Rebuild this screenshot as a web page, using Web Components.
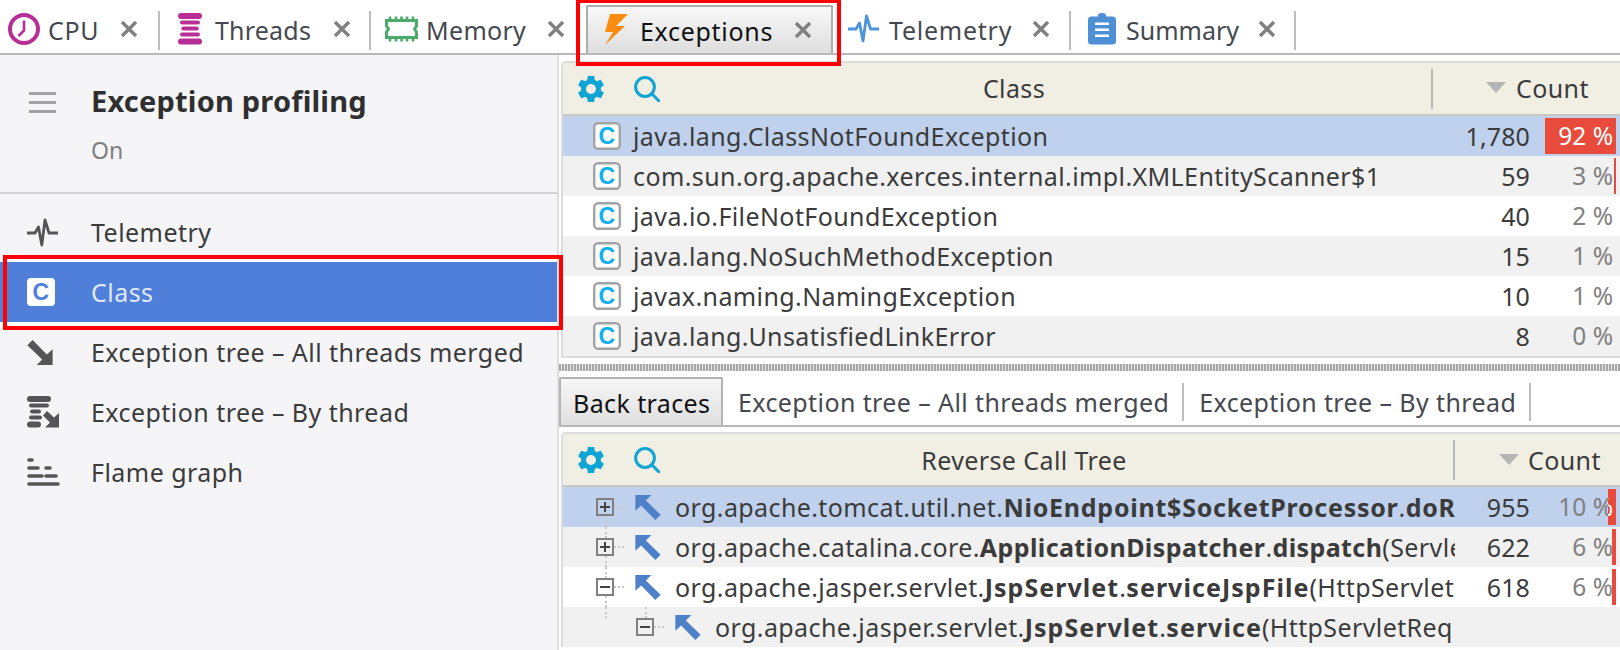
<!DOCTYPE html>
<html><head><meta charset="utf-8">
<style>
html,body{margin:0;padding:0;width:1620px;height:650px;overflow:hidden;background:#fff;font-family:"Noto Sans","Liberation Sans",sans-serif;color:#3b3b3b}
</style></head><body>
<app-root></app-root>
<script>
const GEAR='<svg class="g" width="26" height="26" viewBox="2.5 2.5 19 19" fill="#0ea5d4"><path d="M19.14 12.94c.04-.3.06-.61.06-.94 0-.32-.02-.64-.07-.94l2.03-1.58c.18-.14.23-.41.12-.61l-1.92-3.32c-.12-.22-.37-.29-.59-.22l-2.39.96c-.5-.38-1.03-.7-1.62-.94l-.36-2.54c-.04-.24-.24-.41-.48-.41h-3.84c-.24 0-.43.17-.47.41l-.36 2.54c-.59.24-1.13.57-1.62.94l-2.39-.96c-.22-.08-.47 0-.59.22L2.74 8.87c-.12.21-.08.47.12.61l2.03 1.58c-.05.3-.09.63-.09.94s.02.64.07.94l-2.03 1.58c-.18.14-.23.41-.12.61l1.92 3.32c.12.22.37.29.59.22l2.39-.96c.5.38 1.03.7 1.62.94l.36 2.54c.05.24.24.41.48.41h3.84c.24 0 .44-.17.47-.41l.36-2.54c.59-.24 1.13-.56 1.62-.94l2.39.96c.22.08.47 0 .59-.22l1.92-3.32c.12-.22.07-.47-.12-.61l-2.01-1.58zM12 15.6c-1.98 0-3.6-1.62-3.6-3.6s1.62-3.6 3.6-3.6 3.6 1.62 3.6 3.6-1.62 3.6-3.6 3.6z"/></svg>';
const SEARCH='<svg class="s" width="26" height="26" viewBox="0 0 26 26" fill="none" stroke="#0ea5d4" stroke-width="3"><circle cx="11" cy="11" r="9.4"/><path d="M17.8 17.8L25 25" stroke-linecap="round"/></svg>';
const ARROW_DR='M0 5.3L5.3 0L19.5 14.5L25.3 9.3V25H9.3L14.8 19.5Z';
const ICONS={
cpu:'<svg width="32" height="32" viewBox="0 0 32 32" fill="none" stroke="#b82e96"><circle cx="16" cy="16" r="14" stroke-width="4"/><path d="M16 7.5V17.5L10.5 23" stroke-width="2.6"/></svg>',
threads:'<svg width="24" height="32" viewBox="0 0 24 32" fill="#b82e96"><rect x="0" y="0" width="24" height="6" rx="3"/><rect x="2" y="7.5" width="20" height="4" rx="2"/><rect x="3.3" y="13.4" width="17.4" height="4" rx="2"/><rect x="2" y="19.4" width="20" height="4" rx="2"/><rect x="0" y="25.6" width="24" height="6" rx="3"/></svg>',
memory:'<svg width="33" height="26" viewBox="0 0 33 26" fill="none" stroke="#4caa6a"><path d="M1.5 4.5H31.5V10L29.5 13L31.5 16V21.5H1.5V16L3.500 13L1.5 10Z" stroke-width="3"/><path d="M5 0.500V4M11 0.500V4M16.500 0.500V4M22 0.500V4M28 0.500V4M5 22V25.500M11 22V25.500M16.500 22V25.500M22 22V25.500M28 22V25.500" stroke-width="2.600"/></svg>',
exc:'<svg width="26" height="32" viewBox="0 0 26 32" fill="#fb8c12"><path d="M23 0H5L0 18H8L0 31L20 12H11Z"/></svg>',
tele:'<svg width="31" height="30" viewBox="0 0 31 30" fill="none" stroke="#4d93d9" stroke-width="2.8" stroke-linejoin="round"><path d="M0 15H8L11.500 9L15 27L18.500 2L22.500 15H31"/></svg>',
summary:'<svg width="28" height="32" viewBox="0 0 28 32" fill="#4d90d6"><rect x="0" y="3.500" width="28" height="28" rx="3.500"/><rect x="10" y="0" width="8" height="8" rx="3"/><path d="M7 9.500H21V12H7ZM7 15.500H21V18H7ZM7 21.500H21V24H7Z" fill="#fff"/></svg>',
s_tele:'<svg width="31" height="29" viewBox="0 0 31 29" fill="none" stroke="#555" stroke-width="2.800" stroke-linejoin="round"><path d="M0 15H8L11.500 9L14.800 27L18 2L22 15H31"/></svg>',
s_class:'<svg width="28" height="28" viewBox="0 0 28 28"><rect width="28" height="28" rx="4" fill="#fff"/><text x="14" y="22.300" text-anchor="middle" font-family="Liberation Sans" font-weight="700" font-size="23" fill="#4f7fd9">C</text></svg>',
s_arrow:`<svg width="26" height="25" viewBox="0 0 25.300 25" fill="#555"><path d="${ARROW_DR}"/></svg>`,
s_thread:'<svg width="33" height="32" viewBox="0 0 33 32" fill="#555"><rect x="0" y="0" width="24" height="6" rx="3"/><rect x="2" y="7.500" width="20" height="4" rx="2"/><rect x="3" y="13.500" width="11" height="4" rx="2"/><rect x="2" y="19.500" width="13" height="4" rx="2"/><rect x="0" y="25.500" width="14" height="6" rx="3"/><path d="M16 19.500L20 15L27 21.500L32 17V31.500H18L23 26.500Z"/></svg>',
s_flame:'<svg width="33" height="28" viewBox="0 0 33 28"><g stroke="#555" stroke-width="3.600" stroke-linecap="round"><path d="M2 2H5M2 10H11M19 10H23M2 18H15M19 18H29M2 26H31"/></g></svg>'
};
function def(name,cls){customElements.define(name,cls)}
class Base extends HTMLElement{
  constructor(){super();this.attachShadow({mode:'open'})}
  connectedCallback(){this.shadowRoot.innerHTML=this.render()}
}
def('tab-item',class extends Base{render(){
  const a=this.hasAttribute('active');
  return `<style>
  :host{display:flex;align-items:center;box-sizing:border-box;height:48px;width:var(--w);padding-left:var(--pl);flex:none;font-size:25px;letter-spacing:var(--ls,.3px);color:${a?'#111':'#45494f'}}
  :host([active]){background:linear-gradient(#f8f8f8,#dedede);border:2px solid #adadad;border-bottom:0;border-radius:2px 2px 0 0;height:48px;padding-left:14px}
  :host([sep]){position:relative}
  :host([sep])::after{content:"";position:absolute;right:0;top:6px;width:2px;height:39px;background:#bdbdbd}
  .i{display:flex;align-items:center;width:var(--tx);flex:none;height:100%}
  .l{width:var(--lw);flex:none;white-space:nowrap;padding-top:2px}
  svg.x{flex:none}
  </style><span class="i">${ICONS[this.getAttribute('icon')]}</span><span class="l"><slot></slot></span>
  <svg class="x" width="18" height="18" viewBox="0 0 18 18" stroke="#808080" stroke-width="3.400"><path d="M2 2L16 16M16 2L2 16"/></svg>`;
}});
def('tab-bar',class extends Base{render(){return `<style>:host{display:flex;align-items:flex-end;height:53px;box-sizing:content-box;padding-left:0;border-bottom:2px solid #b8b8b8;overflow:visible}
 div{display:flex;align-items:flex-end;height:48px}</style><div><slot></slot></div>`}});
def('side-item',class extends Base{render(){return `<style>:host{display:flex;align-items:center;height:60px;padding-left:27px;font-size:25px;color:#3b3b3b;letter-spacing:.45px}
 :host([selected]){background:#4f7fd9;color:#dfe9fb;box-shadow:0 -3px 0 #fff,0 4px 0 #fff}
 .i{width:64px;flex:none;display:flex;align-items:center}</style><span class="i">${ICONS[this.getAttribute('icon')]}</span><slot></slot>`}});
def('side-panel',class extends Base{render(){return `<style>:host{display:block;width:557px;flex:none;background:#f5f5f8;border-right:2px solid #dedede;box-sizing:content-box;height:595px}
 header{display:flex;height:139px;box-sizing:border-box;border-bottom:2px solid #d3d3d3;padding:28px 0 0 29px}
 .m{width:27px;height:21px;margin:9px 35px 0 0;display:flex;flex-direction:column;justify-content:space-between}
 .m i{display:block;height:3px;background:#a3a3a3}
 h1{margin:0;font-size:29px;line-height:36px;font-weight:700;letter-spacing:.2px;color:#2f2f2f}
 p{margin:16px 0 0;font-size:23px;line-height:30px;color:#808080}
 nav{padding-top:8px;display:block}
 </style><header><div class="m"><i></i><i></i><i></i></div><div><h1>Exception profiling</h1><p>On</p></div></header><nav><slot></slot></nav>`}});
def('data-table',class extends Base{render(){return `<style>:host{display:block;border:2px solid #dcdcdc;border-right:0;border-radius:5px 0 0 0;margin-left:2px;overflow:hidden;background:#fff}
 :host([lower]){border-bottom:0}</style><slot></slot>`}});
def('table-head',class extends Base{render(){
  return `<style>:host{display:flex;align-items:center;height:51px;background:#f1eee3;border-bottom:2px solid #c9c8c0;font-size:25px;letter-spacing:.4px;color:#3b3b3b}
  .tool{display:flex;align-items:center;width:0;flex:none;overflow:visible}
  .g{display:block;margin-left:15px;flex:none} .s{display:block;flex:none;margin-left:30px}
  .t{flex:none;box-sizing:border-box;width:var(--cw);padding-left:var(--cp);text-align:center;height:40px;line-height:var(--lh,40px);border-right:2px solid #b9b9b9}
  .c{flex:1;display:flex;align-items:center;padding-left:var(--sp);margin-top:var(--my,0)}
  .c i{width:0;height:0;border:10px solid transparent;border-top:11px solid #b5b5b5;border-bottom:0;margin-right:var(--tg)}
  </style><div class="tool">${GEAR}${SEARCH}</div>
  <div class="t"><slot></slot></div><div class="c"><i></i>Count</div>`;
}});
const CI='<svg class="ci" width="28" height="28" viewBox="0 0 28 28"><rect x="1.200" y="1.200" width="25.600" height="25.600" rx="4" fill="#fff" stroke="#a3a3a3" stroke-width="2.400"/><text x="14" y="22" text-anchor="middle" font-family="Liberation Sans" font-weight="700" font-size="23" fill="#0cb0f0">C</text></svg>';
const ARR=`<svg width="26" height="25" viewBox="0 0 25.300 25" fill="#4f81c8"><path transform="rotate(180 12.650 12.500)" d="${ARROW_DR}"/></svg>`;
def('data-row',class extends Base{render(){
  const g=n=>this.getAttribute(n);
  const sel=this.hasAttribute('selected'), alt=this.hasAttribute('alt');
  const bar=g('bar');
  const exp=g('exp');
  const lvl=+(g('lvl')||0);
  const lead=exp!==null
   ? `<span class="ex" style="margin-left:${33+lvl*40}px"><svg width="18" height="18" viewBox="0 0 18 18" fill="none"><rect x="1" y="1" width="16" height="16" stroke="#808080" stroke-width="2"/><path d="${exp==='+'?'M4 9H14M9 4V14':'M4 9H14'}" stroke="#444" stroke-width="2"/></svg></span><span class="guide h" style="left:${51+lvl*40}px"></span>${lvl?`<span class="guide v" style="left:82px;top:0;height:11px"></span>`:''}${g('vt')!==null?'<span class="guide v" style="left:42px;top:29px;height:11px"></span>':''}${g('vb')!==null?'<span class="guide v" style="left:42px;top:0;height:11px"></span>':''}<span class="ar" style="margin-left:21px">${ARR}</span>`
   : `<span class="ci-w">${CI}</span>`;
  return `<style>:host{display:flex;align-items:center;position:relative;height:40px;font-size:25px;letter-spacing:.4px;color:#3b3b3b;background:${sel?'#bfd1ec':alt?'#f1f1f1':'#fff'}}
  .n{width:var(--nw);flex:none;display:flex;align-items:center;overflow:hidden;white-space:nowrap;height:100%}
  .ci-w{margin-left:30px;margin-right:12px;display:flex;flex:none}
  .ex,.ar{display:flex;flex:none}.ar{margin-right:14px}
  .guide{position:absolute;border:0 dotted #c8c8c8}
  .guide.h{width:10px;top:19px;border-top-width:2px}
  .guide.v{border-left-width:2px}
  .cnt{width:var(--cw2);flex:none;text-align:right;letter-spacing:.1px}
  .pct{position:absolute;right:7px;top:0;line-height:40px;color:#808080;letter-spacing:0;font-size:24.500px}
  .bar{position:absolute;right:4px;top:2px;bottom:2px;background:#e84b3c;overflow:hidden}
  .bar::after{content:attr(data-t);position:absolute;right:3px;top:-2px;line-height:40px;color:#fff;white-space:nowrap;letter-spacing:0;font-size:24.500px}
  </style><div class="n">${lead}<span><slot></slot></span></div><div class="cnt">${g('count')||''}</div>
  ${g('pct')?`<span class="pct">${g('pct')}</span>`:''}${bar?`<span class="bar" style="width:${bar}px" data-t="${g('pct')}"></span>`:''}`;
}});
def('sub-tab',class extends Base{render(){return `<style>:host{display:flex;align-items:center;box-sizing:border-box;height:48px;flex:none;font-size:25px;letter-spacing:.4px;padding:2px 15px 0 15px;color:#45494f;position:relative;white-space:nowrap}
 :host([active]){background:linear-gradient(#f6f6f6,#dfdfdf);border:2px solid #b3b3b3;border-bottom:0;color:#111;padding:2px 0 0 12px;width:164px;border-radius:2px 2px 0 0}
 :host([sep])::after{content:"";position:absolute;right:0;top:6px;height:38px;width:2px;background:#bdbdbd}</style><slot></slot>`}});
def('sub-tabs',class extends Base{render(){return `<style>:host{display:flex;height:48px;margin:6px 0 0 0;border-bottom:2px solid #b8b8b8}</style><slot></slot>`}});
def('h-split',class extends Base{render(){return `<style>:host{display:block;height:7px;margin-top:6px;background:repeating-linear-gradient(90deg,#a8a8a8 0 2px,#e6e6e6 2px 3px)}</style>`}});
def('red-box',class extends Base{render(){return `<style>:host{position:absolute;box-sizing:border-box;border:4px solid #f00;pointer-events:none;z-index:5}</style>`}});
def('app-root',class extends Base{render(){return `<style>
 :host{display:block;position:relative;width:1620px;height:650px;overflow:hidden}
 .main{display:flex;height:595px}
 .content{flex:1;min-width:0;padding-top:6px;overflow:hidden;background:#fff}
 .up{--nw:840px;--cw2:127px}
 .lo{--nw:892px;--cw2:75px;margin-top:5px}
 b{font-weight:700}
 b.w{letter-spacing:1.050px}
 b.m{letter-spacing:.75px}
 </style>
 <tab-bar>
 <tab-item icon="cpu" sep style="--w:160px;--pl:8px;--tx:40px;--lw:72px;--ls:.7px">CPU</tab-item>
 <tab-item icon="threads" sep style="--w:211px;--pl:18px;--tx:37px;--lw:118px;--ls:.2px">Threads</tab-item>
 <tab-item icon="memory" style="--w:215px;--pl:14px;--tx:41px;--lw:121px">Memory</tab-item>
 <tab-item icon="exc" active style="--w:247px;--tx:35px;--lw:154px;--ls:.7px;padding-left:17px">Exceptions</tab-item>
 <tab-item icon="tele" sep style="--w:238px;--pl:15px;--tx:41px;--lw:143px;--ls:.75px">Telemetry</tab-item>
 <tab-item icon="summary" sep style="--w:225px;--pl:17px;--tx:38px;--lw:132px;--ls:0">Summary</tab-item>
 </tab-bar>
 <div class="main">
 <side-panel>
  <side-item icon="s_tele">Telemetry</side-item>
  <side-item icon="s_class" selected>Class</side-item>
  <side-item icon="s_arrow">Exception tree – All threads merged</side-item>
  <side-item icon="s_thread">Exception tree – By thread</side-item>
  <side-item icon="s_flame">Flame graph</side-item>
 </side-panel>
 <div class="content">
  <data-table class="up">
   <table-head style="--cw:870px;--cp:34px;--sp:53px;--tg:10px;--my:-2px;--lh:38px">Class</table-head>
   <data-row selected count="1,780" pct="92 %" bar="71">java.lang.ClassNotFoundException</data-row>
   <data-row alt count="59" pct="3 %" bar="2">com.sun.org.apache.xerces.internal.impl.XMLEntityScanner$1</data-row>
   <data-row count="40" pct="2 %">java.io.FileNotFoundException</data-row>
   <data-row alt count="15" pct="1 %">java.lang.NoSuchMethodException</data-row>
   <data-row count="10" pct="1 %">javax.naming.NamingException</data-row>
   <data-row alt count="8" pct="0 %">java.lang.UnsatisfiedLinkError</data-row>
  </data-table>
  <h-split></h-split>
  <sub-tabs>
   <sub-tab active>Back traces</sub-tab>
   <sub-tab sep>Exception tree – All threads merged</sub-tab>
   <sub-tab sep>Exception tree – By thread</sub-tab>
  </sub-tabs>
  <data-table class="lo" lower>
   <table-head lower style="--cw:892px;--cp:32px;--sp:44px;--tg:9px">Reverse Call Tree</table-head>
   <data-row selected exp="+" vt count="955" pct="10 %" bar="8">org.apache.tomcat.util.net.<b class="m">NioEndpoint$SocketProcessor</b>.<b class="m">doRu</b></data-row>
   <data-row alt exp="+" vt vb count="622" pct="6 %" bar="4">org.apache.catalina.core.<b>ApplicationDispatcher</b>.<b>dispatch</b>(Servle</data-row>
   <data-row exp="-" vb vt count="618" pct="6 %" bar="4">org.apache.jasper.servlet.<b class="w">JspServlet</b>.<b class="w">serviceJspFile</b>(HttpServlet</data-row>
   <data-row alt exp="-" lvl="1" vb>org.apache.jasper.servlet.<b class="w">JspServlet</b>.<b class="w">service</b>(HttpServletReq</data-row>
  </data-table>
 </div>
 </div>
 <red-box style="left:576px;top:-1px;width:265px;height:67px"></red-box>
 <red-box style="left:3px;top:255px;width:560px;height:75px"></red-box>`}});
</script>
</body></html>
